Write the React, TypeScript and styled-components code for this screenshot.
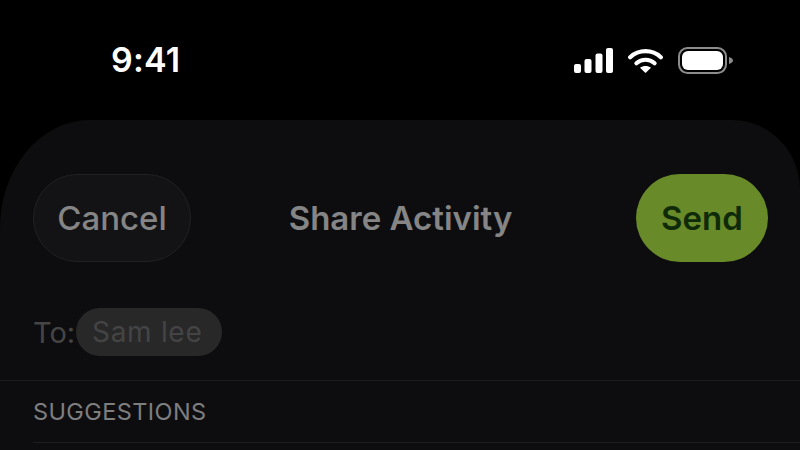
import React from "react";
import styled, { createGlobalStyle } from "styled-components";

const GlobalStyle = createGlobalStyle`
  html, body {
    margin: 0;
    padding: 0;
    background: #000;
    overflow: hidden;
  }
  body {
    font-family: Inter, "Liberation Sans", sans-serif;
  }
`;

const Screen = styled.div`
  width: 800px;
  height: 450px;
  background: #000;
  display: flex;
  flex-direction: column;
  overflow: hidden;
`;

const StatusBar = styled.div`
  height: 120px;
  flex: none;
  box-sizing: border-box;
  padding: 38px 66px 0 111px;
  display: flex;
  justify-content: space-between;
  align-items: flex-start;
`;

const Clock = styled.div`
  color: #fff;
  font-size: 34px;
  line-height: 44px;
  font-weight: 600;
  letter-spacing: 0.2px;
`;

const StatusIcons = styled.div`
  display: flex;
  align-items: center;
  gap: 15px;
  height: 44px;
`;

const Sheet = styled.div`
  flex: 1;
  background: #0d0d0f;
  border-radius: 90px 68px 0 0 / 108px 70px 0 0;
  box-sizing: border-box;
  padding: 54px 32px 0 33px;
`;

const Header = styled.div`
  display: grid;
  grid-template-columns: 1fr auto 1fr;
  align-items: center;
  height: 88px;
`;

const CancelButton = styled.div`
  width: 158px;
  height: 88px;
  box-sizing: border-box;
  border-radius: 44px;
  background: #131315;
  border: 1px solid #212123;
  color: #858585;
  font-size: 33px;
  font-weight: 500;
  display: flex;
  align-items: center;
  justify-content: center;
`;

const Title = styled.div`
  color: #858585;
  font-size: 33px;
  font-weight: 600;
`;

const SendButton = styled.div`
  justify-self: end;
  width: 132px;
  height: 88px;
  border-radius: 44px;
  background: #688a28;
  color: #0f2a08;
  font-size: 33px;
  font-weight: 600;
  display: flex;
  align-items: center;
  justify-content: center;
`;

const ToRow = styled.div`
  display: flex;
  align-items: center;
  height: 48px;
  margin-top: 46px;
`;

const ToLabel = styled.div`
  color: #454546;
  font-size: 29px;
  width: 43px;
`;

const Chip = styled.div`
  width: 146px;
  height: 48px;
  box-sizing: border-box;
  padding-left: 16px;
  border-radius: 24px;
  background: #282829;
  color: #444445;
  font-size: 28px;
  letter-spacing: 0.7px;
  display: flex;
  align-items: center;
`;

const Divider = styled.div<{ $inset?: boolean }>`
  height: 1px;
  background: #1d1d1f;
  margin-right: -32px;
  margin-left: ${(p) => (p.$inset ? "0" : "-33px")};
`;

const ToDivider = styled(Divider)`
  margin-top: 24px;
`;

const SectionLabel = styled.div`
  color: #7e7e7f;
  font-size: 23.5px;
  line-height: 61px;
  height: 61px;
  letter-spacing: 0.4px;
`;

const SignalIcon = () => (
  <svg width="39" height="25" viewBox="0 0 39 25">
    <rect x="0" y="16" width="7" height="9" rx="2" fill="#fff" />
    <rect x="10.5" y="11" width="7" height="14" rx="2" fill="#fff" />
    <rect x="21.5" y="5.5" width="7" height="19.5" rx="2" fill="#fff" />
    <rect x="32" y="0" width="7" height="25" rx="2" fill="#fff" />
  </svg>
);

const WifiIcon = () => (
  <svg width="35" height="25" viewBox="0 0 35 25" fill="none">
    <path d="M2.2 9.2C10.8 1.2 24.2 1.2 32.8 9.2" stroke="#fff" strokeWidth="4.2" strokeLinecap="round" />
    <path d="M8.4 15.2C13.6 10.6 21.4 10.6 26.6 15.2" stroke="#fff" strokeWidth="4.2" strokeLinecap="round" />
    <path d="M17.5 25L12 19.8C15.2 17.4 19.8 17.4 23 19.8Z" fill="#fff" />
  </svg>
);

const BatteryIcon = () => (
  <svg width="56" height="27" viewBox="0 0 56 27" fill="none">
    <rect x="1" y="1" width="47" height="25" rx="8.5" stroke="#8c8c8c" strokeWidth="2" />
    <rect x="4" y="4" width="41" height="19" rx="6" fill="#fff" />
    <path d="M51 10C53.5 10.8 55 12 55 13.5C55 15 53.5 16.2 51 17Z" fill="#8c8c8c" />
  </svg>
);

export default function App() {
  return (
    <Screen>
      <GlobalStyle />
      <StatusBar>
        <Clock>9:41</Clock>
        <StatusIcons>
          <SignalIcon />
          <WifiIcon />
          <BatteryIcon />
        </StatusIcons>
      </StatusBar>
      <Sheet>
        <Header>
          <CancelButton>Cancel</CancelButton>
          <Title>Share Activity</Title>
          <SendButton>Send</SendButton>
        </Header>
        <ToRow>
          <ToLabel>To:</ToLabel>
          <Chip>Sam lee</Chip>
        </ToRow>
        <ToDivider />
        <SectionLabel>SUGGESTIONS</SectionLabel>
        <Divider $inset />
      </Sheet>
    </Screen>
  );
}
